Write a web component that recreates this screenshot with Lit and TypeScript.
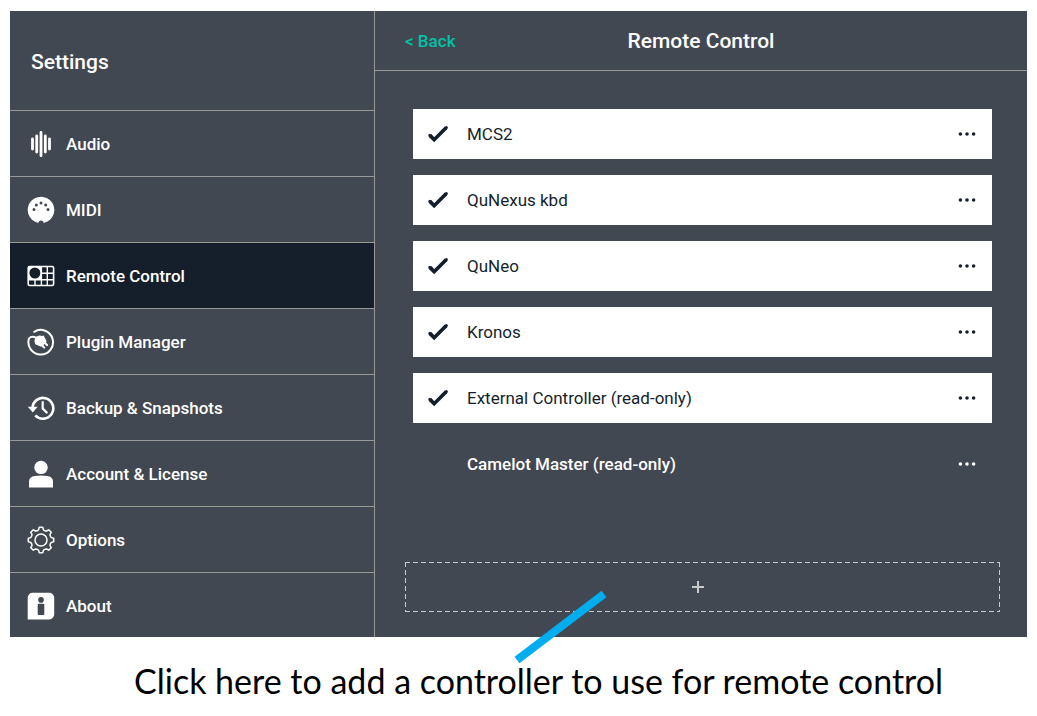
import { LitElement, html, css, svg } from "lit";
import { customElement, state } from "lit/decorators.js";
import { classMap } from "lit/directives/class-map.js";

// Outline of an eight-toothed gear centred in a 28 x 28 box.
function gearPath(): string {
  const at = (r: number, deg: number) => {
    const a = (deg * Math.PI) / 180;
    return `${(14 + r * Math.sin(a)).toFixed(2)} ${(14 - r * Math.cos(a)).toFixed(2)}`;
  };
  let d = `M${at(12.8, -8)}`;
  for (let t = 0; t < 360; t += 45) {
    d += `L${at(12.8, t + 8)}L${at(10.6, t + 13)}Q${at(9.6, t + 22.5)} ${at(10.6, t + 32)}L${at(12.8, t + 37)}`;
  }
  return d + "Z";
}

const icons: Record<string, unknown> = {
  audio: svg`<path d="M5.5 9v10M9.7 6v16M14 2.3v23.4M18.3 6v16M22.5 9v10" fill="none" stroke="currentColor" stroke-width="2.8" stroke-linecap="round"/>`,
  midi: svg`<path fill="currentColor" fill-rule="evenodd" d="M10.6 26.8A13.3 13.3 0 1 1 17.4 26.8L16.6 26.8Q16.2 24.6 14 24.6T11.4 26.8Z
    M5.5 13.5a1.5 1.5 0 1 0 3 0a1.5 1.5 0 1 0-3 0M7.8 9a1.5 1.5 0 1 0 3 0a1.5 1.5 0 1 0-3 0M12.5 7a1.5 1.5 0 1 0 3 0a1.5 1.5 0 1 0-3 0M17.2 9a1.5 1.5 0 1 0 3 0a1.5 1.5 0 1 0-3 0M19.5 13.5a1.5 1.5 0 1 0 3 0a1.5 1.5 0 1 0-3 0"/>`,
  remote: svg`<g fill="none" stroke="currentColor">
    <rect x="1.2" y="4.5" width="25.4" height="19" rx="1.5" stroke-width="1.6"/>
    <path stroke-width="1.4" d="M14.4 4.5v19M20.3 4.5v19M14.4 11.2h12M1.2 17.8h25.4M8 17.8v5.7"/>
    <circle cx="7.9" cy="11" r="6.2" stroke-width="1.4"/></g>
    <path fill="currentColor" d="M1.2 4.5h5L1.2 9ZM14.4 4.5h-4.8l4.8 4.3ZM14.4 18v-5l-4.4 5ZM1.2 18v-5l4.6 5Z"/>`,
  plugin: svg`<path fill="none" stroke="currentColor" stroke-width="2" stroke-linecap="round" d="M7.2 3.8A12.3 12.3 0 1 1 2 10.5Q4.5 7.3 9.5 9.8"/>
    <path fill="currentColor" d="M8.2 9.6Q11.5 6.6 15.2 8L16.6 7.4L19.6 13.2L18.9 14.4L20.8 16.3A1 1 0 0 1 19.3 17.8L17.5 16.1L16.4 17.1L18 18.9A1 1 0 0 1 16.5 20.3L14.6 18.4L13.6 18.6L8.2 16.2Q6.8 12.6 8.2 9.6Z"/>`,
  backup: svg`<path fill="none" stroke="currentColor" stroke-width="2.6" d="M5.5 14.5A10.4 10.4 0 1 1 8.3 21.4"/>
    <path fill="currentColor" d="M.8 12.8L10.6 12.8L5.8 18.6Z"/>
    <path fill="none" stroke="currentColor" stroke-width="2.2" d="M15.7 7.3v7.2l4.6 4.6"/>`,
  account: svg`<circle cx="14" cy="7.4" r="6.7" fill="currentColor"/>
    <path fill="currentColor" d="M2 27.6V21.5Q2.2 16.6 8 16Q14 15.2 20 16Q25.8 16.6 26 21.5V27.6Z"/>`,
  options: svg`<g fill="none" stroke="currentColor" stroke-width="1.5" stroke-linejoin="round"><path d=${gearPath()}/><circle cx="14" cy="14" r="6"/></g>`,
  about: svg`<path fill="currentColor" fill-rule="evenodd" d="M6 .8H22A5 5 0 0 1 27.2 6V22A5 5 0 0 1 22 27.4H.7V6A5 5 0 0 1 6 .8Z
    M11.2 7.9a2.8 2.8 0 1 0 5.6 0a2.8 2.8 0 1 0-5.6 0M11.5 11.8a.8.8 0 0 0-.8.8V22.2a.8.8 0 0 0 .8.8H16.5a.8.8 0 0 0 .8-.8V12.6a.8.8 0 0 0-.8-.8Z"/>`,
};

interface Section {
  icon: string;
  label: string;
}

interface Controller {
  name: string;
  enabled: boolean;
}

@customElement("app-root")
export class AppRoot extends LitElement {
  static styles = css`
    :host {
      display: block;
      box-sizing: border-box;
      min-height: 100vh;
      padding: 11px 10px 0;
      background: #fff;
      font-family: Roboto, sans-serif;
      font-weight: 500;
      font-size: 17px;
      line-height: 20px;
      --panel: #424851;
      --ink: #151f2b;
      --line: #999995;
    }
    * {
      box-sizing: border-box;
    }
    button {
      border: 0;
      padding: 0;
      background: none;
      color: inherit;
      font: inherit;
      cursor: pointer;
    }
    svg {
      display: block;
      flex: none;
    }
    h1,
    h2 {
      margin: 0;
      font-size: 21px;
      line-height: 26px;
      font-weight: 500;
    }
    .figure {
      position: relative;
    }
    .window {
      display: grid;
      grid-template-columns: minmax(220px, 365px) 1fr;
      background: var(--panel);
      color: #fff;
    }
    .sidebar {
      border-right: 1px solid var(--line);
    }
    .sidebar-head {
      height: 99px;
      display: flex;
      align-items: center;
      padding: 2px 21px 0;
    }
    .item {
      display: flex;
      align-items: center;
      gap: 11px;
      width: 100%;
      height: 66px;
      padding: 0 17px;
      border-top: 1px solid var(--line);
      text-align: left;
    }
    .item:last-child {
      height: 65px;
      padding-top: 1px;
    }
    .item.current {
      background: var(--ink);
    }
    .main {
      display: flex;
      flex-direction: column;
    }
    .bar {
      display: grid;
      grid-template-columns: 1fr auto 1fr;
      align-items: center;
      height: 60px;
      padding: 1px 30px 0;
      border-bottom: 1px solid var(--line);
    }
    .back {
      color: #00c2a8;
      text-decoration: none;
    }
    .list {
      display: grid;
      gap: 16px;
      margin: 0;
      padding: 38px 35px 0 38px;
      list-style: none;
    }
    .row {
      display: flex;
      align-items: center;
      height: 50px;
      padding: 0 16px 0 15px;
    }
    .row.on {
      background: #fff;
      color: var(--ink);
      font-weight: 400;
    }
    .pick {
      display: grid;
      grid-template-columns: 20px 1fr;
      column-gap: 19px;
      align-items: center;
      flex: 1;
      cursor: pointer;
    }
    .box,
    .tick {
      grid-area: 1 / 1;
    }
    .box {
      appearance: none;
      width: 20px;
      height: 20px;
      margin: 0;
    }
    .tick {
      visibility: hidden;
      pointer-events: none;
    }
    .box:checked + .tick {
      visibility: visible;
    }
    .add {
      display: flex;
      align-items: center;
      justify-content: center;
      height: 50px;
      margin: 73px 27px 25px 30px;
      padding-right: 10px;
      color: #c9cac8;
      --h: repeating-linear-gradient(90deg, currentColor 0 5px, transparent 5px 8px);
      --v: repeating-linear-gradient(currentColor 0 5px, transparent 5px 8px);
      background:
        var(--h) top / 100% 1px no-repeat,
        var(--h) bottom / 100% 1px no-repeat,
        var(--v) left / 1px 100% no-repeat,
        var(--v) right / 1px 100% no-repeat;
    }
    .pointer {
      position: absolute;
      left: 500px;
      bottom: -30px;
      pointer-events: none;
    }
    .caption {
      margin: 0;
      padding: 20px 0 0 124px;
      font-family: Lato, sans-serif;
      font-weight: 400;
      font-size: 34px;
      line-height: 48px;
      color: #000;
    }
  `;

  @state() private current = "Remote Control";

  @state() private controllers: Controller[] = [
    { name: "MCS2", enabled: true },
    { name: "QuNexus kbd", enabled: true },
    { name: "QuNeo", enabled: true },
    { name: "Kronos", enabled: true },
    { name: "External Controller (read-only)", enabled: true },
    { name: "Camelot Master (read-only)", enabled: false },
  ];

  private sections: Section[] = [
    { icon: "audio", label: "Audio" },
    { icon: "midi", label: "MIDI" },
    { icon: "remote", label: "Remote Control" },
    { icon: "plugin", label: "Plugin Manager" },
    { icon: "backup", label: "Backup & Snapshots" },
    { icon: "account", label: "Account & License" },
    { icon: "options", label: "Options" },
    { icon: "about", label: "About" },
  ];

  private toggle(index: number) {
    this.controllers = this.controllers.map((c, i) => (i === index ? { ...c, enabled: !c.enabled } : c));
  }

  private renderSection(s: Section) {
    return html`<button
      class=${classMap({ item: true, current: s.label === this.current })}
      @click=${() => (this.current = s.label)}
    >
      <svg width="28" height="28" viewBox="0 0 28 28" aria-hidden="true">${icons[s.icon]}</svg>
      <span>${s.label}</span>
    </button>`;
  }

  private renderController(c: Controller, i: number) {
    return html`<li class=${classMap({ row: true, on: c.enabled })}>
      <label class="pick">
        <input class="box" type="checkbox" .checked=${c.enabled} @change=${() => this.toggle(i)} />
        <svg class="tick" width="20" height="20" viewBox="0 0 20 20" aria-hidden="true">
          <path d="M1.9 11.4L6.2 15.7L18.1 3.8" fill="none" stroke="currentColor" stroke-width="3.7" stroke-linejoin="miter" />
          <path d="M1.9 11.4L3 12.5M17.4 4.5L18.3 3.6" fill="none" stroke="currentColor" stroke-width="3" stroke-linecap="round" />
        </svg>
        <span>${c.name}</span>
      </label>
      <button aria-label="More">
        <svg width="18" height="20" viewBox="0 0 18 20" aria-hidden="true">
          <g fill="currentColor"><circle cx="2.4" cy="10" r="1.8" /><circle cx="9" cy="10" r="1.8" /><circle cx="15.6" cy="10" r="1.8" /></g>
        </svg>
      </button>
    </li>`;
  }

  render() {
    return html`
      <div class="figure">
        <div class="window">
          <nav class="sidebar">
            <div class="sidebar-head"><h2>Settings</h2></div>
            ${this.sections.map((s) => this.renderSection(s))}
          </nav>
          <section class="main">
            <header class="bar">
              <a class="back" href="#">&lt; Back</a>
              <h1>Remote Control</h1>
            </header>
            <ul class="list">
              ${this.controllers.map((c, i) => this.renderController(c, i))}
            </ul>
            <button class="add" aria-label="Add controller">
              <svg width="12" height="12" viewBox="0 0 12 12" aria-hidden="true">
                <path d="M6 0v12M0 6h12" stroke="currentColor" stroke-width="2" />
              </svg>
            </button>
          </section>
        </div>
        <svg class="pointer" width="110" height="80" viewBox="0 0 110 80" aria-hidden="true">
          <path d="M7 73L94 7" stroke="#00aeef" stroke-width="8" />
        </svg>
      </div>
      <p class="caption">Click here to add a controller to use for remote control</p>
    `;
  }
}
